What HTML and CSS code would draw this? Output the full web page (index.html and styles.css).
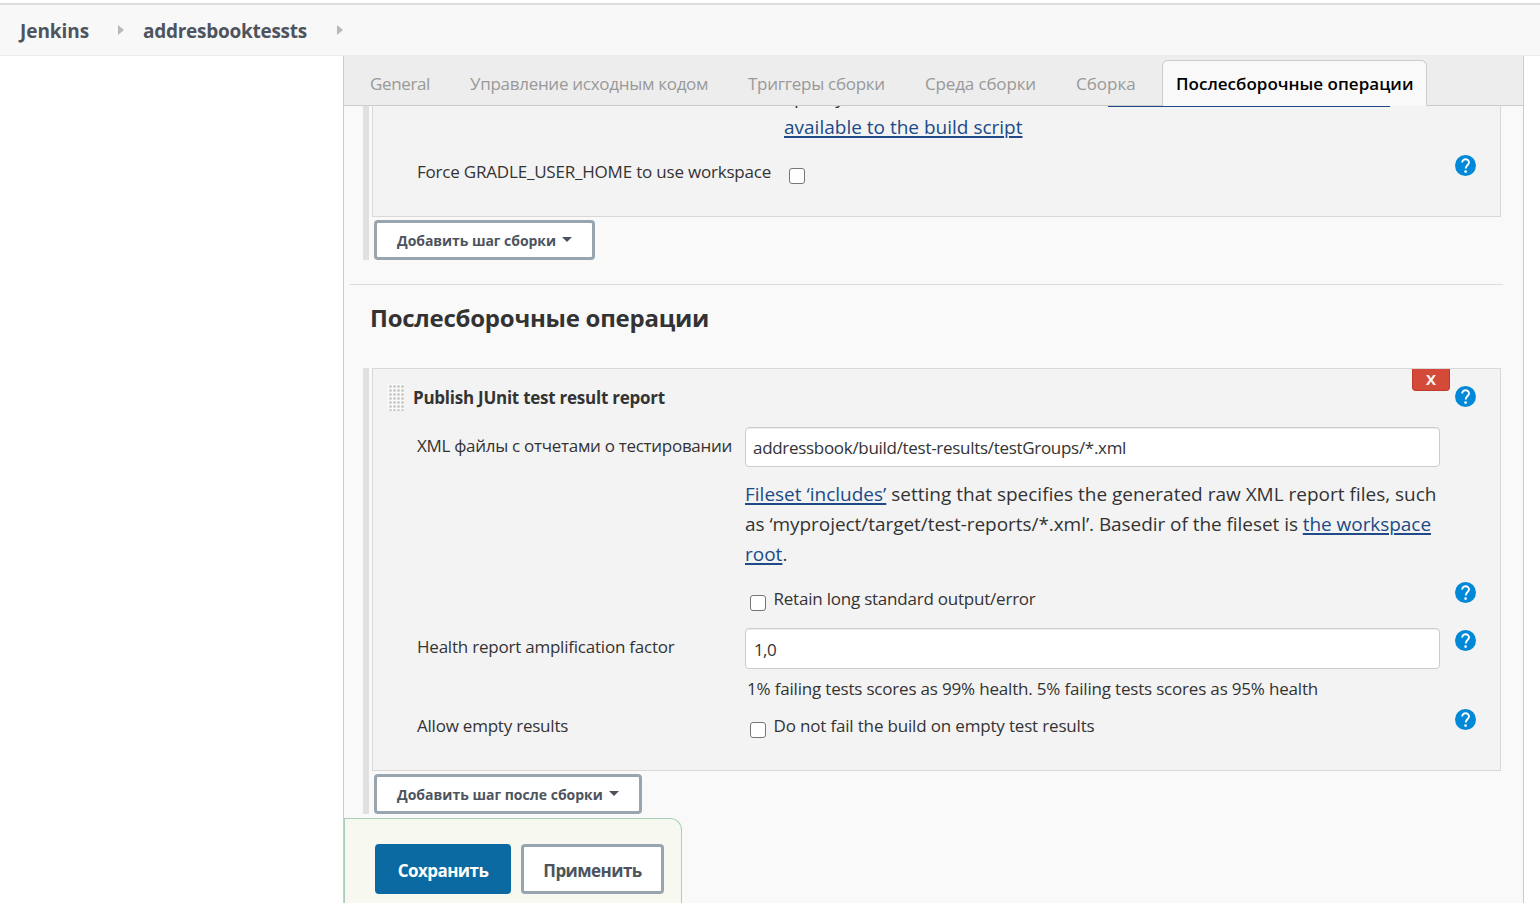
FILE: index.html
```html
<!DOCTYPE html>
<html lang="ru">
<head>
<meta charset="utf-8">
<title>addresbooktessts Config [Jenkins]</title>
<link rel="stylesheet" href="styles.css">
</head>
<body>
<svg class="defs" width="0" height="0" aria-hidden="true">
  <symbol id="help" viewBox="0 0 21 21"><circle cx="10.500" cy="10.500" r="10.500" fill="#0288d8"/><path fill="none" stroke="#fff" stroke-width="1.900" d="M7.200 7.600a3.400 3.400 0 1 1 6.800 0c0 2.200-3.300 2.700-3.300 5.800"/><circle cx="10.600" cy="16.600" r="1.350" fill="#fff"/></symbol>
</svg>
<header class="crumbs">
  <a class="crumb c1">Jenkins</a><i class="sep"></i><a class="crumb c2">addresbooktessts</a><i class="sep"></i>
</header>
<main class="panel">
  <nav class="tabs">
    <a class="tab t1">General</a>
    <a class="tab t2">Управление исходным кодом</a>
    <a class="tab t3">Триггеры сборки</a>
    <a class="tab t4">Среда сборки</a>
    <a class="tab t5">Сборка</a>
    <a class="tab t6 active">Послесборочные операции</a>
  </nav>
  <div class="content">
    <section class="steps first">
      <div class="card">
        <p class="desc clipped"><span class="lead"><span>Specify custom build variables here</span><span>,</span></span><a class="vars">all the other build tasks made</a><br><a>available to the build script</a></p>
        <div class="row force">
          <label class="name wide">Force GRADLE_USER_HOME to use workspace</label>
          <input type="checkbox" class="box">
          <svg class="help"><use href="#help"/></svg>
        </div>
      </div>
      <button class="btn add step">Добавить шаг сборки<i class="caret"></i></button>
    </section>
    <hr class="rule">
    <h2 class="title">Послесборочные операции</h2>
    <section class="steps">
      <div class="card">
        <div class="card-head">
          <i class="grip"></i>
          <b class="card-title">Publish JUnit test result report</b>
          <button class="remove">X</button>
          <svg class="help"><use href="#help"/></svg>
        </div>
        <div class="row files">
          <label class="name cyr">XML файлы с отчетами о тестировании</label>
          <div class="input path">addressbook/build/test-results/testGroups/*.xml</div>
        </div>
        <p class="desc info"><a>Fileset ‘includes’</a> setting that specifies the generated raw XML report files, such<br><span class="second">as ‘myproject/target/test-reports/*.xml’. Basedir of the fileset is <a>the workspace</a></span><br><a>root</a>.</p>
        <div class="row retain">
          <label class="name"></label>
          <div class="check"><input type="checkbox" class="box">Retain long standard output/error</div>
          <svg class="help"><use href="#help"/></svg>
        </div>
        <div class="row health">
          <label class="name">Health report amplification factor</label>
          <div class="input tall">1,0</div>
          <svg class="help"><use href="#help"/></svg>
        </div>
        <div class="hint">1% failing tests scores as 99% health. 5% failing tests scores as 95% health</div>
        <div class="row allow">
          <label class="name">Allow empty results</label>
          <div class="check"><input type="checkbox" class="box">Do not fail the build on empty test results</div>
          <svg class="help"><use href="#help"/></svg>
        </div>
      </div>
      <button class="btn add post">Добавить шаг после сборки<i class="caret"></i></button>
    </section>
    <footer class="actions">
      <button class="btn save">Сохранить</button>
      <button class="btn apply">Применить</button>
    </footer>
  </div>
</main>
</body>
</html>
```
FILE: styles.css
```css
* { box-sizing: border-box; }
body {
  margin: 0;
  height: 903px;
  overflow: hidden;
  display: flex;
  flex-direction: column;
  background: #fff;
  color: #333;
  font: 17px/24px "Open Sans", "Noto Sans", sans-serif;
  white-space: nowrap;
}
a { color: inherit; }
p, h2 { margin: 0; }
button { font-family: inherit; padding: 0; }
.defs { position: absolute; }

.crumbs {
  flex: none;
  display: flex;
  align-items: center;
  height: 53px;
  margin-top: 3px;
  padding-left: 19px;
  border-top: 2px solid #dcdce1;
  border-bottom: 1px solid #ececec;
  background: #f8f8f8;
  color: #4d545d;
  font-size: 19px;
  font-weight: 700;
}
.crumb { padding-top: 1px; letter-spacing: -.27px; }
.crumb.c1 { width: 70px; letter-spacing: -.05px; text-indent: 1px; }
.crumb.c2 { width: 164px; }
.sep {
  margin: 0 19px 0 29px;
  border-left: 6px solid #b9b9b9;
  border-top: 5px solid transparent;
  border-bottom: 5px solid transparent;
}
.sep:last-child { margin-left: 30px; }

.panel {
  flex: 1;
  min-height: 0;
  width: 1181px;
  margin-left: 343px;
  display: flex;
  flex-direction: column;
  border: solid #ccc;
  border-width: 0 1px;
  background: #f9f9f9;
}
.tabs {
  flex: none;
  display: flex;
  align-items: flex-end;
  height: 50px;
  padding-left: 12px;
  border-bottom: 1px solid #ccc;
  background: #ededed;
  color: #999;
}
.tab {
  height: 45px;
  padding: 12px 0 0 14px;
  letter-spacing: -.29px;
}
.t1 { width: 100px; letter-spacing: -.37px; }
.t2 { width: 278px; }
.t3 { width: 177px; }
.t4 { width: 151px; letter-spacing: -.15px; }
.t5 { width: 100px; letter-spacing: 0; }
.tab.active {
  width: 265px;
  height: 46px;
  margin-bottom: -1px;
  padding: 11px 0 0 13px;
  border: 1px solid #ccc;
  border-bottom: 0;
  border-radius: 6px 6px 0 0;
  background: #f9f9f9;
  color: #000;
  font-weight: 600;
  letter-spacing: .02px;
}

.content {
  flex: 1;
  min-height: 0;
  overflow: hidden;
  letter-spacing: -.22px;
}
.steps {
  margin-left: 19px;
  padding-left: 3px;
  border-left: 6px solid #e0e0e0;
}
.card {
  display: flow-root;
  width: 1129px;
  border: 1px solid #d8d8d8;
  background: #f3f3f3;
}
.first .card {
  height: 111px;
  border-top: 0;
}
.desc {
  font-size: 19px;
  line-height: 30px;
  letter-spacing: 0;
}
.desc a {
  color: #204a87;
  text-decoration: underline;
  text-decoration-thickness: 2px;
  text-underline-offset: 2px;
}
.clipped { margin-top: -24px; padding-left: 411px; }
.lead {
  display: inline-flex;
  justify-content: space-between;
  width: 324px;
  padding-right: 5px;
  letter-spacing: -.3px;
}
.desc .vars {
  letter-spacing: .65px;
  text-underline-offset: 1px;
}
.second { letter-spacing: -.055px; }
.row {
  display: flex;
  align-items: flex-start;
  padding-left: 44px;
}
.name { width: 328px; }
.name.wide { width: 372px; letter-spacing: -.2px; }
.name.cyr { letter-spacing: -.29px; }
.box {
  appearance: none;
  flex: none;
  width: 16px;
  height: 16px;
  margin: 0;
  border: 1px solid #767676;
  border-radius: 3px;
  background: #fff;
}
.help {
  flex: none;
  width: 21px;
  height: 21px;
}
.row .help { margin-left: auto; margin-right: 24px; }
.force { padding-top: 13px; }
.force .name { padding-top: 5px; }
.force .box { margin-top: 13px; }

.btn {
  display: flex;
  align-items: center;
  border: 3px solid #98a5ae;
  border-radius: 4px;
  background: #fff;
  color: #4d545d;
  font-weight: 700;
  white-space: nowrap;
}
.add {
  height: 40px;
  margin: 3px 0 0 2px;
  padding: 0 0 0 20px;
  font-size: 14px;
}
.step { width: 221px; letter-spacing: -.05px; }
.post { width: 268px; letter-spacing: 0; }
.caret {
  margin: -1px 0 0 6px;
  border-top: 5px solid #4d545d;
  border-left: 5px solid transparent;
  border-right: 5px solid transparent;
}
.rule {
  width: 1153px;
  height: 1px;
  margin: 24px 0 0 6px;
  border: 0;
  background: #ddd;
}
.title {
  height: 83px;
  padding: 17px 0 0 26px;
  font-size: 24px;
  line-height: 32px;
  letter-spacing: -.25px;
}

.card-head {
  display: flex;
  align-items: flex-start;
  height: 58px;
  padding: 0 24px 0 15px;
}
.grip {
  width: 16px;
  height: 27px;
  margin: 15px 9px 0 0;
  background: radial-gradient(circle at 2.5px 2.5px, #c6c6c2 .8px, #fafafa 1.9px) 0 0 / 4px 4px;
}
.card-title { padding-top: 17px; letter-spacing: -.25px; }
.remove {
  width: 38px;
  height: 22px;
  margin-left: auto;
  margin-right: 5px;
  border: 1px solid #c03a2c;
  border-top: 0;
  border-radius: 0 0 4px 4px;
  background: #d34a38;
  color: #f3f3f3;
  font-size: 15px;
  line-height: 21px;
  font-weight: 700;
}
.card-head .help { margin-top: 17px; }
.input {
  width: 695px;
  height: 40px;
  padding: 8px 0 0 7px;
  border: 1px solid #ccc;
  border-radius: 4px;
  background: #fff;
  box-shadow: inset 0 1px 1px rgba(0, 0, 0, .075);
}
.input.path { letter-spacing: -.3px; }
.input.tall { height: 41px; padding: 9px 0 0 8px; letter-spacing: -.6px; }
.files .name { padding-top: 7px; }
.info { padding: 12px 0 0 372px; }
.retain { height: 59px; padding-top: 13px; }
.check { display: flex; align-items: flex-start; padding-left: 5px; gap: 7.5px; letter-spacing: -.17px; }
.retain .check { padding-top: 5px; letter-spacing: -.22px; }
.check .box { margin-top: 8px; }
.health .name { padding-top: 7px; }
.health .help { margin-top: 2px; }
.hint { padding: 8px 0 0 374px; letter-spacing: -.186px; }
.allow { height: 69px; padding-top: 8px; }
.allow .name, .allow .check { padding-top: 5px; }

.actions {
  display: flex;
  gap: 10px;
  width: 338px;
  height: 86px;
  margin-top: 4px;
  padding: 25px 0 0 30px;
  border: 1px solid #a9cfb9;
  border-bottom: 0;
  border-radius: 0 12px 0 0;
  background: #f7f8f0;
}
.save, .apply {
  justify-content: center;
  height: 50px;
  padding-top: 3px;
  font-size: 17px;
  letter-spacing: -.55px;
}
.save {
  width: 136px;
  border-color: #0b6aa2;
  background: #0b6aa2;
  color: #fff;
}
.apply { width: 143px; }
```
